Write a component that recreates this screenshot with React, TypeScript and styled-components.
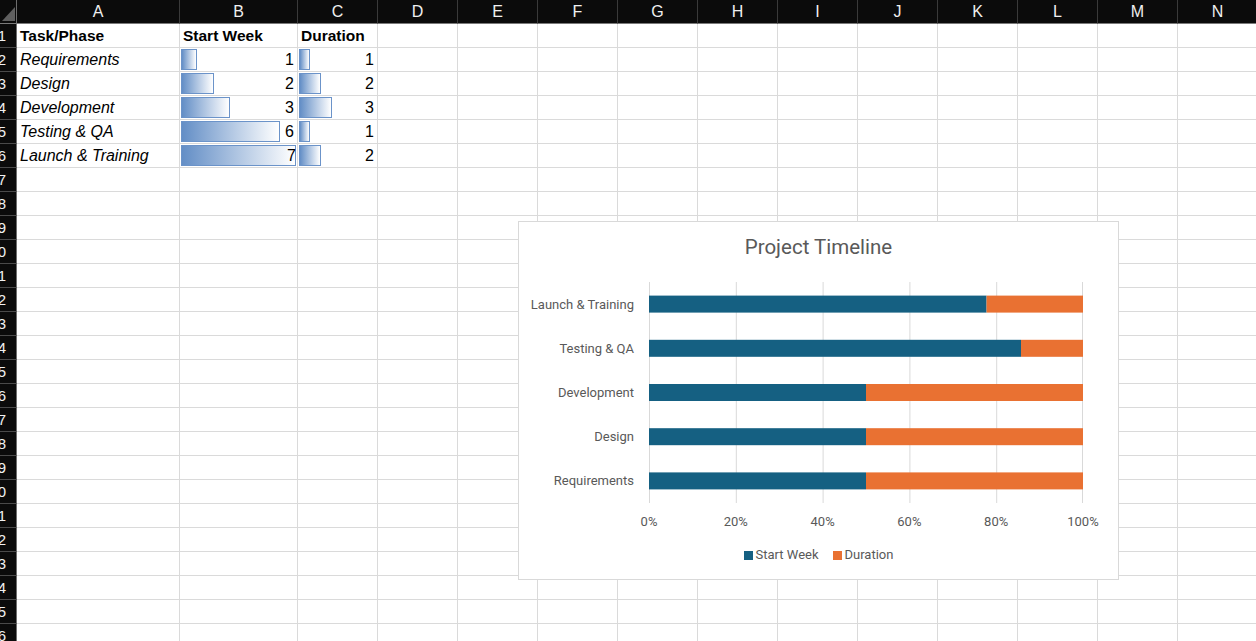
import React, { FC } from 'react'
import styled, { createGlobalStyle } from 'styled-components'

const GlobalStyle = createGlobalStyle`
	html, body {
		margin: 0;
		padding: 0;
		background: #ffffff;
		overflow: hidden;
	}
`

interface Task {
	name: string
	start: number
	duration: number
}

const tasks: Task[] = [
	{ name: 'Requirements', start: 1, duration: 1 },
	{ name: 'Design', start: 2, duration: 2 },
	{ name: 'Development', start: 3, duration: 3 },
	{ name: 'Testing & QA', start: 6, duration: 1 },
	{ name: 'Launch & Training', start: 7, duration: 2 }
]

const letters = ['A', 'B', 'C', 'D', 'E', 'F', 'G', 'H', 'I', 'J', 'K', 'L', 'M', 'N']
const ROWS = 26
const BLUE = '#156082'
const ORANGE = '#e97132'

const Page = styled.div`
	position: relative;
	width: 1256px;
	height: 641px;
	overflow: hidden;
`

const Sheet = styled.div`
	display: grid;
	grid-template-columns: 17px 163px 118px repeat(12, 80px);
	grid-auto-rows: 24px;
	width: max-content;
	font-family: 'Liberation Sans', Arial, sans-serif;
`

const HeadBase = styled.div`
	box-sizing: border-box;
	background: #0b0b0b;
	color: #f0f0f0;
	font-size: 16px;
	display: flex;
	align-items: center;
	overflow: hidden;
	white-space: nowrap;
`

const Corner = styled(HeadBase)`
	border-right: 1px solid #6d6d6d;
	border-bottom: 1px solid #7a7a7a;
	justify-content: flex-end;
	align-items: flex-end;
	padding: 0 1px 2px 0;

	& svg {
		display: block;
	}
`

const ColHead = styled(HeadBase)`
	justify-content: center;
	border-right: 1px solid #3a3a3a;
	border-bottom: 1px solid #7a7a7a;
`

const RowHead = styled(HeadBase)`
	justify-content: flex-end;
	padding-right: 10px;
	font-size: 15px;
	border-right: 1px solid #6d6d6d;
	border-bottom: 1px solid #4a4a4a;
`

const Cell = styled.div<{ $bold?: boolean; $italic?: boolean }>`
	box-sizing: border-box;
	border-right: 1px solid #dadada;
	border-bottom: 1px solid #dadada;
	padding: 0 3px;
	display: flex;
	align-items: center;
	font-size: ${(p) => (p.$bold ? '15.5px' : '16px')};
	color: #000;
	font-weight: ${(p) => (p.$bold ? 700 : 400)};
	font-style: ${(p) => (p.$italic ? 'italic' : 'normal')};
	white-space: nowrap;
	overflow: visible;
`

const BarCell = styled.div`
	box-sizing: border-box;
	border-right: 1px solid #dadada;
	border-bottom: 1px solid #dadada;
	padding: 1px 3px 1px 1px;
	display: grid;
	font-size: 16px;
	color: #000;
`

const DataBar = styled.div`
	grid-area: 1 / 1;
	justify-self: start;
	box-sizing: border-box;
	height: 21px;
	border: 1px solid #6b93c9;
	background: linear-gradient(to right, #638ec6, #ffffff);
`

const Value = styled.span`
	grid-area: 1 / 1;
	justify-self: end;
	align-self: center;
	position: relative;
`

const Chart = styled.div`
	position: absolute;
	left: 518px;
	top: 221px;
	width: 601px;
	height: 359px;
	box-sizing: border-box;
	border: 1px solid #d9d9d9;
	background: #ffffff;
	font-family: Roboto, 'Liberation Sans', sans-serif;
	color: #595959;
`

const Title = styled.div`
	box-sizing: border-box;
	height: 60px;
	padding-top: 13px;
	text-align: center;
	font-size: 20.5px;
	line-height: 24px;
`

const Plot = styled.div`
	display: grid;
	grid-template-columns: 130px 434px;
	height: 221px;
`

const CategoryList = styled.div`
	display: grid;
	grid-template-rows: repeat(5, 1fr);
`

const Category = styled.div`
	display: flex;
	align-items: center;
	justify-content: flex-end;
	padding-right: 15px;
	font-size: 13px;
	white-space: nowrap;
`

const AxisLabels = styled.div`
	display: grid;
	grid-template-columns: repeat(6, 86.8px);
	margin: 11px 0 0 86.6px;
	font-size: 13px;
	line-height: 16px;
	text-align: center;
`

const Legend = styled.div`
	display: flex;
	justify-content: center;
	gap: 14px;
	margin-top: 17px;
	font-size: 13px;
	line-height: 16px;
`

const LegendItem = styled.div`
	display: flex;
	align-items: center;
	gap: 3px;
`

const Swatch = styled.span<{ $color: string }>`
	width: 9px;
	height: 9px;
	background: ${(p) => p.$color};
`

const PLOT_W = 434
const PLOT_H = 221

const TimelineChart: FC = () => {
	const ordered = [...tasks].reverse()
	const band = PLOT_H / ordered.length
	const barH = 17
	return (
		<Chart>
			<Title>Project Timeline</Title>
			<Plot>
				<CategoryList>
					{ordered.map((t) => (
						<Category key={t.name}>{t.name}</Category>
					))}
				</CategoryList>
				<svg width={PLOT_W} height={PLOT_H}>
					{[0, 1, 2, 3, 4, 5].map((i) => {
						const x = Math.min(PLOT_W - 0.5, i * (PLOT_W / 5) + 0.5)
						return <line key={i} x1={x} x2={x} y1={0} y2={PLOT_H} stroke='#d9d9d9' strokeWidth={1} />
					})}
					{ordered.map((t, i) => {
						const y = i * band + (band - barH) / 2
						const split = (t.start / (t.start + t.duration)) * PLOT_W
						return (
							<g key={t.name}>
								<rect x={0} y={y} width={split} height={barH} fill={BLUE} />
								<rect x={split} y={y} width={PLOT_W - split} height={barH} fill={ORANGE} />
							</g>
						)
					})}
				</svg>
			</Plot>
			<AxisLabels>
				{[0, 20, 40, 60, 80, 100].map((v) => (
					<span key={v}>{v}%</span>
				))}
			</AxisLabels>
			<Legend>
				<LegendItem>
					<Swatch $color={BLUE} />
					Start Week
				</LegendItem>
				<LegendItem>
					<Swatch $color={ORANGE} />
					Duration
				</LegendItem>
			</Legend>
		</Chart>
	)
}

const App: FC = () => {
	const maxStart = Math.max(...tasks.map((t) => t.start))
	const maxDur = Math.max(...tasks.map((t) => t.duration))
	const rows = []
	for (let r = 1; r <= ROWS; r++) {
		const cells = []
		cells.push(<RowHead key='h'>{r}</RowHead>)
		const task = r >= 2 ? tasks[r - 2] : undefined
		for (let c = 0; c < letters.length; c++) {
			const key = `${r}-${c}`
			if (r === 1 && c < 3) {
				cells.push(
					<Cell key={key} $bold>
						{['Task/Phase', 'Start Week', 'Duration'][c]}
					</Cell>
				)
			} else if (task && c === 0) {
				cells.push(
					<Cell key={key} $italic>
						{task.name}
					</Cell>
				)
			} else if (task && c === 1) {
				cells.push(
					<BarCell key={key}>
						<DataBar style={{ width: Math.round((task.start / maxStart) * 115) }} />
						<Value>{task.start}</Value>
					</BarCell>
				)
			} else if (task && c === 2) {
				cells.push(
					<BarCell key={key}>
						<DataBar style={{ width: Math.round((task.duration / maxDur) * 33) }} />
						<Value>{task.duration}</Value>
					</BarCell>
				)
			} else {
				cells.push(<Cell key={key} />)
			}
		}
		rows.push(...cells)
	}

	return (
		<Page>
			<GlobalStyle />
			<Sheet>
				<Corner>
					<svg width={13} height={14} viewBox='0 0 13 14'>
						<polygon points='13,0 13,14 0,14' fill='#5f5f5f' />
					</svg>
				</Corner>
				{letters.map((l) => (
					<ColHead key={l}>{l}</ColHead>
				))}
				{rows}
			</Sheet>
			<TimelineChart />
		</Page>
	)
}

export default App
